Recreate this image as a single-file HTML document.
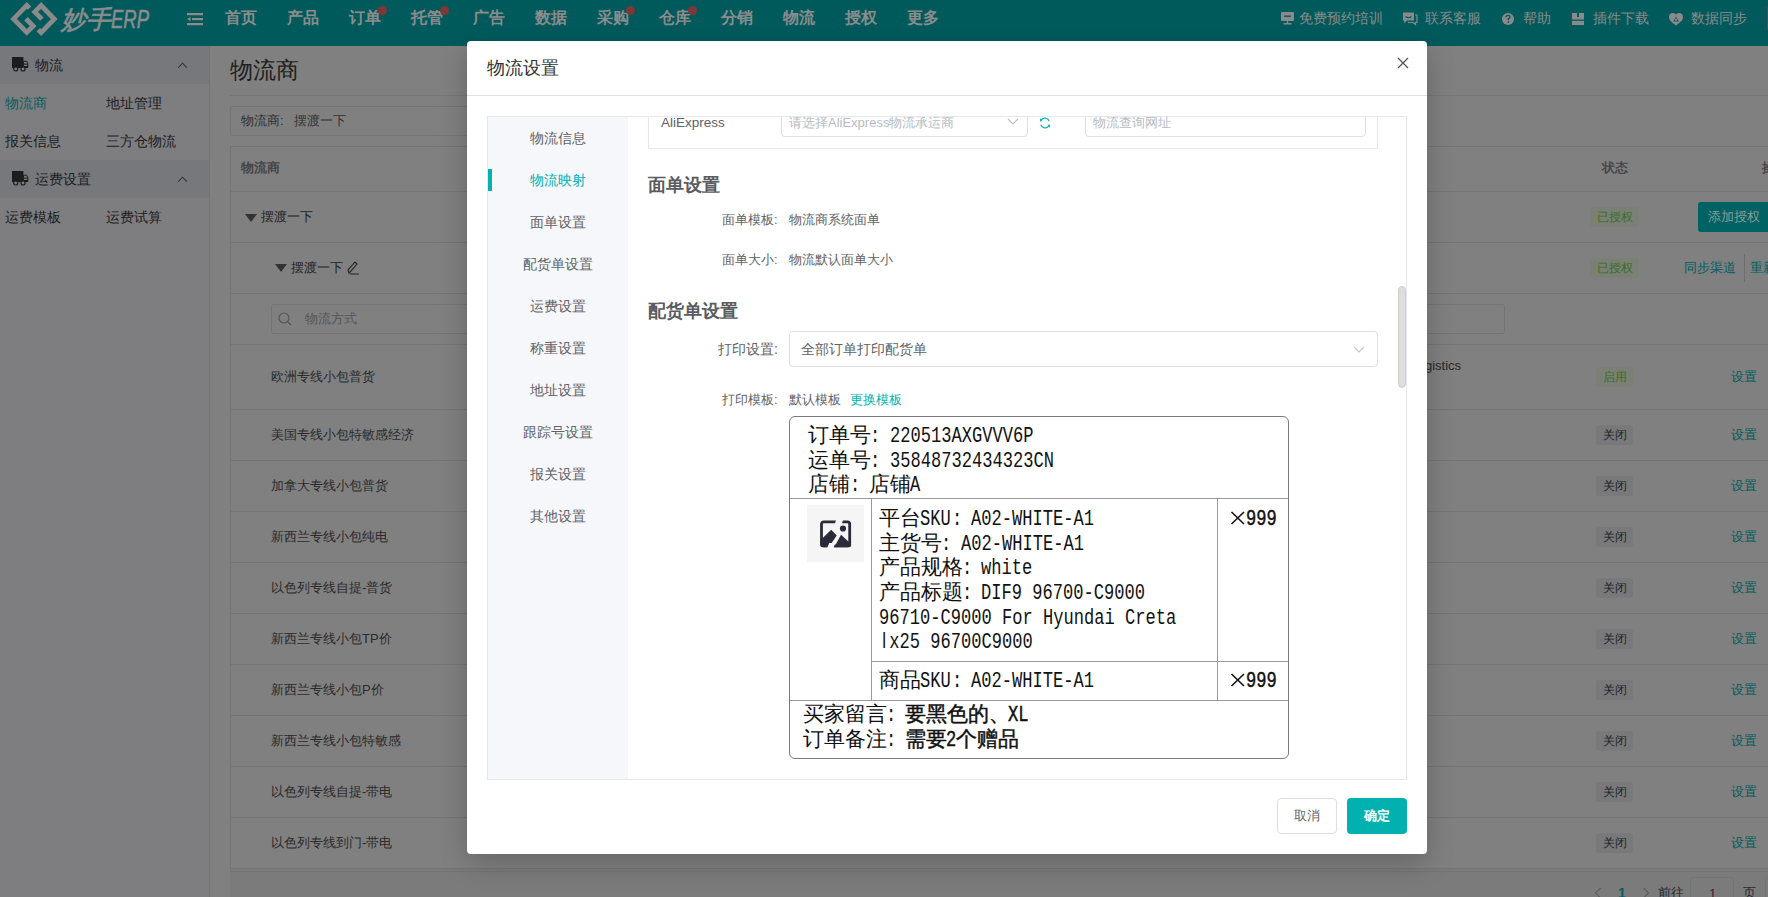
<!DOCTYPE html>
<html><head><meta charset="utf-8">
<style>
*{box-sizing:border-box;margin:0;padding:0;white-space:nowrap}
html,body{width:1768px;height:897px;overflow:hidden;background:#808080;font-family:"Liberation Sans",sans-serif;position:relative}
.a{position:absolute;white-space:nowrap}
#hdr{position:absolute;left:0;top:0;width:1768px;height:46px;background:#005a5c}
.nav{position:absolute;top:7px;font-size:16px;font-weight:bold;color:#8c8c8c;line-height:22px}
.dot{position:absolute;width:9px;height:9px;border-radius:50%;background:#7e3838}
.rn{position:absolute;top:9px;font-size:14px;color:#8a8a8a;line-height:18px}
#side{position:absolute;left:0;top:46px;width:210px;height:851px;background:#7e7e80;border-right:1px solid #737375}
.grp{position:absolute;left:0;width:209px;height:38px;background:#77787b}
.st{position:absolute;font-size:14px;color:#1c1c1e;line-height:18px}
.ln{position:absolute;left:230px;width:1538px;height:1px;background:#737477}
.tc{position:absolute;font-size:13px;color:#2a2a2c;line-height:18px}
.tag{position:absolute;font-size:12px;line-height:20px;height:20px;width:37px;text-align:center;border-radius:3px}
.on{background:#7a8076;color:#3d6e1e}
.off{background:#79797b;color:#222}
.set{position:absolute;left:1731px;font-size:13px;color:#015e5e;line-height:18px}
/* modal */
#modal{position:absolute;left:467px;top:41px;width:960px;height:813px;background:#fff;border-radius:4px;box-shadow:0 8px 28px rgba(0,0,0,.22)}
.mn{position:absolute;left:0;width:140px;text-align:center;font-size:14px;color:#606266;line-height:20px}
.lbl{position:absolute;font-size:13px;color:#606266;line-height:18px}
.t{position:absolute;white-space:nowrap;font-size:20.5px;line-height:24px;color:#111;font-weight:300}
.t.b{-webkit-text-stroke:0.45px #111}
.m{font-family:"Liberation Mono",monospace;display:inline-block;transform:scale(.833,1.1);transform-origin:0 55%;}
</style></head><body>
<div id="hdr">
  <svg class="a" style="left:0;top:0" width="70" height="40" viewBox="0 0 70 40">
    <path d="M29.6 8.1 L26.8 5.3 L13.6 18.9 L26.8 32.4 L33.2 26 L26 18.8" stroke="#8a8a8a" stroke-width="4.8" fill="none" stroke-linejoin="miter" stroke-miterlimit="10"/>
    <path d="M38.3 29.8 L41.1 32.6 L54.3 19 L41.1 5.5 L34.7 11.9 L41.9 19.1" stroke="#8a8a8a" stroke-width="4.8" fill="none" stroke-linejoin="miter" stroke-miterlimit="10"/>
  </svg>
  <div class="a" style="left:61px;top:4px;font-size:25px;font-style:italic;color:#8c8c8c;line-height:30px;-webkit-text-stroke:0.6px #8c8c8c">妙手<span style="display:inline-block;transform:scaleX(.74);transform-origin:0 50%">ERP</span></div>
  <svg class="a" style="left:186px;top:12px" width="18" height="14" viewBox="0 0 18 14">
    <rect x="1" y="1" width="16" height="2.2" fill="#8c8c8c"/><rect x="6" y="6" width="11" height="2.2" fill="#8c8c8c"/><rect x="1" y="11" width="16" height="2.2" fill="#8c8c8c"/><path d="M1 7.1 L4.5 5 L4.5 9.2Z" fill="#8c8c8c"/>
  </svg>
  <div class="nav" style="left:225px">首页</div>
  <div class="nav" style="left:287px">产品</div>
  <div class="nav" style="left:349px">订单</div><div class="dot" style="left:378px;top:6px"></div>
  <div class="nav" style="left:411px">托管</div><div class="dot" style="left:440px;top:6px"></div>
  <div class="nav" style="left:473px">广告</div>
  <div class="nav" style="left:535px">数据</div>
  <div class="nav" style="left:597px">采购</div><div class="dot" style="left:626px;top:6px"></div>
  <div class="nav" style="left:659px">仓库</div><div class="dot" style="left:688px;top:6px"></div>
  <div class="nav" style="left:721px">分销</div>
  <div class="nav" style="left:783px">物流</div>
  <div class="nav" style="left:845px">授权</div>
  <div class="nav" style="left:907px">更多</div>
  <svg class="a" style="left:1280px;top:11px" width="15" height="14" viewBox="0 0 15 14"><rect x="1" y="1" width="13" height="9" rx="1" fill="#8a8a8a"/><rect x="4" y="4.5" width="7" height="1.4" fill="#005a5c"/><rect x="6.8" y="10" width="1.4" height="2.5" fill="#8a8a8a"/><rect x="3.5" y="12" width="8" height="1.5" fill="#8a8a8a"/></svg>
  <svg class="a" style="left:1402px;top:11px" width="16" height="15" viewBox="0 0 16 15"><path d="M1 1.5 H12 V9.5 H5 L2.2 12.5 V9.5 H1Z" fill="#8a8a8a"/><path d="M13 4 H15 V11.5 H13.5 V13.5 L11 11.5 H6" stroke="#8a8a8a" stroke-width="1.2" fill="none"/><path d="M3.5 5.5 Q6.5 8 9.5 5.5" stroke="#005a5c" stroke-width="1.2" fill="none"/></svg>
  <svg class="a" style="left:1501px;top:12px" width="14" height="14" viewBox="0 0 14 14"><circle cx="7" cy="7" r="6" fill="#8a8a8a"/><path d="M5 5.3 Q5 3.4 7 3.4 Q9 3.4 9 5.1 Q9 6.3 7.3 7 V8.3" stroke="#005a5c" stroke-width="1.4" fill="none"/><rect x="6.5" y="9.3" width="1.5" height="1.5" fill="#005a5c"/></svg>
  <svg class="a" style="left:1572px;top:13px" width="12" height="12" viewBox="0 0 12 12"><rect x="0" y="0" width="12" height="12" fill="#8a8a8a"/><rect x="0" y="6.5" width="12" height="1.3" fill="#005a5c"/><rect x="5" y="0" width="2" height="4" fill="#005a5c"/></svg>
  <svg class="a" style="left:1668px;top:12px" width="16" height="14" viewBox="0 0 16 14"><path d="M8 2.5 C6 0 1 0.5 1 5 C1 9 5 11 8 13.5 C11 11 15 9 15 5 C15 0.5 10 0 8 2.5Z" fill="#8a8a8a"/><path d="M8 4.5 L10.8 9.5 H5.2Z" fill="#005a5c"/><circle cx="8" cy="7.8" r="1.2" fill="#8a8a8a"/></svg>
  <div class="rn" style="left:1299px">免费预约培训</div>
  <div class="rn" style="left:1425px">联系客服</div>
  <div class="rn" style="left:1523px">帮助</div>
  <div class="rn" style="left:1593px">插件下载</div>
  <div class="rn" style="left:1691px">数据同步</div>
  <div class="a" style="left:1767px;top:7px;width:1px;height:23px;background:#7e3838"></div>
</div>

<div id="side">
  <div class="grp" style="top:0"></div>
  <svg class="a" style="left:11px;top:11px" width="18" height="15" viewBox="0 0 18 15"><rect x="1" y="0" width="11.4" height="10.5" fill="#1c1c1c"/><path d="M12.4 4.2 H15.6 L16.8 6.5 V10.5 H12.4Z" fill="none" stroke="#1c1c1c" stroke-width="1"/><rect x="12.4" y="6.6" width="4.4" height="1" fill="#1c1c1c"/><rect x="1" y="9" width="16" height="2" fill="#1c1c1c"/><circle cx="4.7" cy="12" r="2" fill="#7e7e80" stroke="#1c1c1c" stroke-width="1.2"/><circle cx="12" cy="12" r="2" fill="#7e7e80" stroke="#1c1c1c" stroke-width="1.2"/></svg><svg class="a" style="left:177px;top:16px" width="11" height="7" viewBox="0 0 11 7"><path d="M1.2 5.6 L5.6 1.2 L9.8 5.6" stroke="#333" stroke-width="1.1" fill="none"/></svg><div class="st" style="left:35px;top:10px">物流</div>
  <div class="st" style="left:5px;top:48px;color:#0b5c5c">物流商</div>
  <div class="st" style="left:106px;top:48px">地址管理</div>
  <div class="st" style="left:5px;top:86px">报关信息</div>
  <div class="st" style="left:106px;top:86px">三方仓物流</div>
  <div class="grp" style="top:114px"></div>
  <svg class="a" style="left:11px;top:125px" width="18" height="15" viewBox="0 0 18 15"><rect x="1" y="0" width="11.4" height="10.5" fill="#1c1c1c"/><path d="M12.4 4.2 H15.6 L16.8 6.5 V10.5 H12.4Z" fill="none" stroke="#1c1c1c" stroke-width="1"/><rect x="12.4" y="6.6" width="4.4" height="1" fill="#1c1c1c"/><rect x="1" y="9" width="16" height="2" fill="#1c1c1c"/><circle cx="4.7" cy="12" r="2" fill="#7e7e80" stroke="#1c1c1c" stroke-width="1.2"/><circle cx="12" cy="12" r="2" fill="#7e7e80" stroke="#1c1c1c" stroke-width="1.2"/></svg><svg class="a" style="left:177px;top:130px" width="11" height="7" viewBox="0 0 11 7"><path d="M1.2 5.6 L5.6 1.2 L9.8 5.6" stroke="#333" stroke-width="1.1" fill="none"/></svg><div class="st" style="left:35px;top:124px">运费设置</div>
  <div class="st" style="left:5px;top:162px">运费模板</div>
  <div class="st" style="left:106px;top:162px">运费试算</div>
</div>

<!-- main page -->
<div class="a" style="left:230px;top:55px;font-size:23px;color:#1e1e1e;line-height:30px">物流商</div>
<div class="a" style="left:230px;top:95px;width:1538px;height:1px;background:#757578"></div>
<div class="a" style="left:230px;top:106px;width:1190px;height:30px;border:1px solid #737477;border-radius:3px"></div>
<div class="tc" style="left:241px;top:112px;color:#303032">物流商:&nbsp;&nbsp;&nbsp;摆渡一下</div>
<div class="a" style="left:230px;top:146px;width:1px;height:723px;background:#737477"></div>
<div class="ln" style="top:146px"></div>
<div class="tc" style="left:241px;top:159px;font-weight:bold;color:#46474b">物流商</div>
<div class="tc" style="left:1602px;top:159px;font-weight:bold;color:#46474b">状态</div>
<div class="tc" style="left:1762px;top:159px;font-weight:bold;color:#46474b">操作</div>
<div class="ln" style="top:191px"></div>
<div class="a" style="left:245px;top:214px;width:0;height:0;border-left:6px solid transparent;border-right:6px solid transparent;border-top:8px solid #333"></div>
<div class="tc" style="left:261px;top:208px;color:#1e1e1e">摆渡一下</div>
<div class="tag on" style="left:1590px;top:207px;width:49px">已授权</div>
<div class="a" style="left:1698px;top:202px;width:80px;height:30px;background:#006262;border-radius:3px;color:#8a9a9a;font-size:13px;line-height:30px;padding-left:10px">添加授权</div>
<div class="ln" style="top:242px"></div>
<div class="a" style="left:275px;top:264px;width:0;height:0;border-left:6px solid transparent;border-right:6px solid transparent;border-top:8px solid #333"></div>
<div class="tc" style="left:291px;top:259px;color:#1e1e1e">摆渡一下</div>
<svg class="a" style="left:346px;top:260px" width="14" height="16" viewBox="0 0 14 16"><path d="M3 13 L2 10 L9 2 L11 4 L4 12 Z M4 14 H13" stroke="#222" stroke-width="1.1" fill="none"/></svg>
<div class="tag on" style="left:1590px;top:258px;width:49px">已授权</div>
<div class="tc" style="left:1684px;top:259px;color:#015e5e">同步渠道</div>
<div class="a" style="left:1744px;top:254px;width:1px;height:28px;background:#6e6e70"></div>
<div class="tc" style="left:1750px;top:259px;color:#015e5e">重新</div>
<div class="ln" style="top:293px"></div>
<div class="a" style="left:271px;top:304px;width:1234px;height:30px;border:1px solid #737477;border-radius:3px"></div>
<svg class="a" style="left:278px;top:312px" width="14" height="14" viewBox="0 0 14 14"><circle cx="6" cy="6" r="5" stroke="#555" stroke-width="1.2" fill="none"/><path d="M10 10 L13 13" stroke="#555" stroke-width="1.2"/></svg>
<div class="tc" style="left:305px;top:310px;color:#555557">物流方式</div>
<div class="ln" style="top:344px"></div>
<div class="tc" style="left:271px;top:368px">欧洲专线小包普货</div>
<div class="tc" style="left:1425px;top:357px">gistics</div>
<div class="tag on" style="left:1596px;top:367px">启用</div>
<div class="set" style="top:368px">设置</div>
<div class="ln" style="top:409px"></div>

<div class="tc" style="left:271px;top:426px">美国专线小包特敏感经济</div><div class="tag off" style="left:1596px;top:425px">关闭</div><div class="set" style="top:426px">设置</div>
<div class="ln" style="top:460px"></div>
<div class="tc" style="left:271px;top:477px">加拿大专线小包普货</div><div class="tag off" style="left:1596px;top:476px">关闭</div><div class="set" style="top:477px">设置</div>
<div class="ln" style="top:511px"></div>
<div class="tc" style="left:271px;top:528px">新西兰专线小包纯电</div><div class="tag off" style="left:1596px;top:527px">关闭</div><div class="set" style="top:528px">设置</div>
<div class="ln" style="top:562px"></div>
<div class="tc" style="left:271px;top:579px">以色列专线自提-普货</div><div class="tag off" style="left:1596px;top:578px">关闭</div><div class="set" style="top:579px">设置</div>
<div class="ln" style="top:613px"></div>
<div class="tc" style="left:271px;top:630px">新西兰专线小包TP价</div><div class="tag off" style="left:1596px;top:629px">关闭</div><div class="set" style="top:630px">设置</div>
<div class="ln" style="top:664px"></div>
<div class="tc" style="left:271px;top:681px">新西兰专线小包P价</div><div class="tag off" style="left:1596px;top:680px">关闭</div><div class="set" style="top:681px">设置</div>
<div class="ln" style="top:715px"></div>
<div class="tc" style="left:271px;top:732px">新西兰专线小包特敏感</div><div class="tag off" style="left:1596px;top:731px">关闭</div><div class="set" style="top:732px">设置</div>
<div class="ln" style="top:766px"></div>
<div class="tc" style="left:271px;top:783px">以色列专线自提-带电</div><div class="tag off" style="left:1596px;top:782px">关闭</div><div class="set" style="top:783px">设置</div>
<div class="ln" style="top:817px"></div>
<div class="tc" style="left:271px;top:834px">以色列专线到门-带电</div><div class="tag off" style="left:1596px;top:833px">关闭</div><div class="set" style="top:834px">设置</div>
<div class="ln" style="top:868px"></div>
<!-- pagination -->
<div class="a" style="left:230px;top:869px;width:1538px;height:28px;background:#7b7b7c"></div>
<div class="a" style="left:230px;top:871px;width:1538px;height:1px;background:#717379"></div>
<svg class="a" style="left:1594px;top:887px" width="8" height="12" viewBox="0 0 8 12"><path d="M6.5 1 L1.5 6 L6.5 11" stroke="#4a4a4c" stroke-width="1" fill="none"/></svg>
<div class="tc" style="left:1618px;top:884px;color:#015e5e;font-size:14px;font-weight:bold">1</div>
<svg class="a" style="left:1642px;top:887px" width="8" height="12" viewBox="0 0 8 12"><path d="M1.5 1 L6.5 6 L1.5 11" stroke="#4a4a4c" stroke-width="1" fill="none"/></svg>
<div class="tc" style="left:1658px;top:884px;color:#2a2a2c">前往</div>
<div class="a" style="left:1690px;top:877px;width:44px;height:30px;border:1px solid #737477;border-radius:3px"></div>
<div class="tc" style="left:1709px;top:885px;color:#2a2a2c">1</div>
<div class="tc" style="left:1743px;top:884px;color:#2a2a2c">页</div>
<div class="a" style="left:1765px;top:877px;width:20px;height:30px;border:1px solid #737477;border-radius:3px"></div>

<div id="modal">
  <div class="a" style="left:20px;top:15px;font-size:18px;color:#303133;line-height:24px">物流设置</div>
  <svg class="a" style="left:930px;top:16px" width="12" height="12" viewBox="0 0 12 12"><path d="M1 1 L11 11 M11 1 L1 11" stroke="#555" stroke-width="1.3"/></svg>
  <div class="a" style="left:0;top:54px;width:960px;height:1px;background:#dcdfe6"></div>
  <div class="a" style="left:20px;top:75px;width:920px;height:664px;border:1px solid #e4e7ed;overflow:hidden">
    <div class="a" style="left:0;top:0;width:140px;height:664px;background:#f5f7fa"></div>
    <div class="a" style="left:0;top:52px;width:4px;height:22px;background:#00b1b3"></div>
    <div class="mn" style="top:11px">物流信息</div>
    <div class="mn" style="top:53px;color:#00b1b3">物流映射</div>
    <div class="mn" style="top:95px">面单设置</div>
    <div class="mn" style="top:137px">配货单设置</div>
    <div class="mn" style="top:179px">运费设置</div>
    <div class="mn" style="top:221px">称重设置</div>
    <div class="mn" style="top:263px">地址设置</div>
    <div class="mn" style="top:305px">跟踪号设置</div>
    <div class="mn" style="top:347px">报关设置</div>
    <div class="mn" style="top:389px">其他设置</div>
    <!-- scrolled card -->
    <div class="a" style="left:160px;top:-10px;width:730px;height:42px;border:1px solid #e4e7ed"></div>
    <div class="a" style="left:173px;top:-3px;font-size:13.5px;color:#606266;line-height:18px">AliExpress</div>
    <div class="a" style="left:293px;top:-10px;width:247px;height:30px;border:1px solid #dcdfe6;border-radius:4px"></div>
    <div class="a" style="left:301px;top:-3px;font-size:13px;color:#b8bbc2;line-height:18px">请选择AliExpress物流承运商</div>
    <svg class="a" style="left:519px;top:1px" width="12" height="7" viewBox="0 0 12 7"><path d="M1 1 L6 6 L11 1" stroke="#b8bbc2" stroke-width="1.1" fill="none"/></svg>
    <svg class="a" style="left:551px;top:0px" width="12" height="12" viewBox="0 0 12 12"><path d="M10.2 4.2 A4.6 4.6 0 0 0 2.2 3 M1.8 7.8 A4.6 4.6 0 0 0 9.8 9" stroke="#1ab5b5" stroke-width="1.3" fill="none"/><path d="M1 1 L3.6 4.2 L1 4.4Z M11 11 L8.4 7.8 L11 7.6Z" fill="#1ab5b5"/></svg>
    <div class="a" style="left:597px;top:-10px;width:281px;height:30px;border:1px solid #dcdfe6;border-radius:4px"></div>
    <div class="a" style="left:605px;top:-3px;font-size:13px;color:#b8bbc2;line-height:18px">物流查询网址</div>
    <!-- sections -->
    <div class="a" style="left:160px;top:56px;font-size:18px;font-weight:bold;color:#5a5c60;line-height:24px">面单设置</div>
    <div class="lbl" style="left:234px;top:94px">面单模板:</div>
    <div class="lbl" style="left:301px;top:94px">物流商系统面单</div>
    <div class="lbl" style="left:234px;top:134px">面单大小:</div>
    <div class="lbl" style="left:301px;top:134px">物流默认面单大小</div>
    <div class="a" style="left:160px;top:182px;font-size:18px;font-weight:bold;color:#5a5c60;line-height:24px">配货单设置</div>
    <div class="lbl" style="left:230px;top:223px;font-size:14px">打印设置:</div>
    <div class="a" style="left:301px;top:214px;width:589px;height:36px;border:1px solid #dcdfe6;border-radius:4px"></div>
    <div class="a" style="left:313px;top:223px;font-size:14px;color:#606266;line-height:18px">全部订单打印配货单</div>
    <svg class="a" style="left:865px;top:229px" width="12" height="7" viewBox="0 0 12 7"><path d="M1 1 L6 6 L11 1" stroke="#c4c7ce" stroke-width="1.1" fill="none"/></svg>
    <div class="lbl" style="left:234px;top:274px">打印模板:</div>
    <div class="lbl" style="left:301px;top:274px">默认模板</div>
    <div class="lbl" style="left:362px;top:274px;color:#00b1b3">更换模板</div>
    <!-- template image -->
    <div class="a" style="left:301px;top:299px;width:500px;height:343px;border:1.5px solid #7a7a7a;border-radius:6px;background:#fff"></div>
    <div class="a" style="left:302px;top:381px;width:498px;height:1.3px;background:#999"></div>
    <div class="a" style="left:383px;top:382px;width:1.3px;height:201px;background:#999"></div>
    <div class="a" style="left:729px;top:382px;width:1.3px;height:201px;background:#999"></div>
    <div class="a" style="left:384px;top:544px;width:416px;height:1.3px;background:#999"></div>
    <div class="a" style="left:302px;top:582.7px;width:498px;height:1.3px;background:#999"></div>
    <div class="a" style="left:319px;top:388px;width:57px;height:57px;background:#f5f5f5"></div>
    <svg class="a" style="left:330px;top:401px" width="36" height="32" viewBox="0 0 36 32"><rect x="3.5" y="3.9" width="28.2" height="23.9" rx="2.2" stroke="#2a2a38" stroke-width="2.8" fill="none"/><path d="M18.6 0.5 H25.6 L23 8 H16Z" fill="#f5f5f5"/><path d="M2.2 22.6 L13.2 11.7 L18.7 17.5 L10.8 29.2 H4.5 Q2.2 29.2 2.2 27Z" fill="#2a2a38"/><path d="M16.3 29.2 L23 16.8 L33.1 25.9 V27 Q33.1 29.2 31 29.2Z" fill="#2a2a38"/><path d="M11.2 25 H17.4 L14.8 31.5 H8.5Z" fill="#f5f5f5"/><path d="M10.8 29.2 L15.5 22 L16.3 29.2Z" fill="none"/><circle cx="25" cy="10.5" r="3.1" fill="#2a2a38"/></svg>
    <!--TPL-->
<div class="t" style="left:319.60px;top:306.00px">订单号</div>
<div class="t" style="left:382.10px;top:306.00px"><span class="m">:</span></div>
<div class="t" style="left:401.60px;top:306.00px"><span class="m">220513AXGVVV6P</span></div>
<div class="t" style="left:319.60px;top:330.50px">运单号</div>
<div class="t" style="left:382.10px;top:330.50px"><span class="m">:</span></div>
<div class="t" style="left:401.60px;top:330.50px"><span class="m">35848732434323CN</span></div>
<div class="t" style="left:319.60px;top:355.00px">店铺</div>
<div class="t" style="left:361.60px;top:355.00px"><span class="m">:</span></div>
<div class="t" style="left:381.10px;top:355.00px">店铺</div>
<div class="t" style="left:422.10px;top:355.00px"><span class="m">A</span></div>
<div class="t" style="left:390.80px;top:388.60px">平台</div>
<div class="t" style="left:431.80px;top:388.60px"><span class="m">SKU</span></div>
<div class="t" style="left:463.55px;top:388.60px"><span class="m">:</span></div>
<div class="t" style="left:483.05px;top:388.60px"><span class="m">A02-WHITE-A1</span></div>
<div class="t" style="left:390.80px;top:413.50px">主货号</div>
<div class="t" style="left:453.30px;top:413.50px"><span class="m">:</span></div>
<div class="t" style="left:472.80px;top:413.50px"><span class="m">A02-WHITE-A1</span></div>
<div class="t" style="left:390.80px;top:438.00px">产品规格</div>
<div class="t" style="left:473.80px;top:438.00px"><span class="m">:</span></div>
<div class="t" style="left:493.30px;top:438.00px"><span class="m">white</span></div>
<div class="t" style="left:390.80px;top:462.60px">产品标题</div>
<div class="t" style="left:473.80px;top:462.60px"><span class="m">:</span></div>
<div class="t" style="left:493.30px;top:462.60px"><span class="m">DIF9&nbsp;96700-C9000</span></div>
<div class="t" style="left:390.80px;top:487.50px"><span class="m">96710-C9000&nbsp;For&nbsp;Hyundai&nbsp;Creta</span></div>
<div class="t" style="left:390.80px;top:512.00px"><span class="m"><span style="font-family:'Liberation Sans',sans-serif;display:inline-block;width:12.3px;text-align:center">l</span>x25&nbsp;96700C9000</span></div>
<div class="t" style="left:390.80px;top:551.00px">商品</div>
<div class="t" style="left:431.80px;top:551.00px"><span class="m">SKU</span></div>
<div class="t" style="left:463.55px;top:551.00px"><span class="m">:</span></div>
<div class="t" style="left:483.05px;top:551.00px"><span class="m">A02-WHITE-A1</span></div>
<svg class="a" style="left:741.50px;top:393.60px" width="16" height="14" viewBox="0 0 16 14"><path d="M1.5 1 L14 13 M14 1 L1.5 13" stroke="#111" stroke-width="1.6"/></svg>
<div class="t b" style="left:758.00px;top:388.60px"><span class="m">999</span></div>
<svg class="a" style="left:741.50px;top:556.00px" width="16" height="14" viewBox="0 0 16 14"><path d="M1.5 1 L14 13 M14 1 L1.5 13" stroke="#111" stroke-width="1.6"/></svg>
<div class="t b" style="left:758.00px;top:551.00px"><span class="m">999</span></div>
<div class="t" style="left:314.70px;top:585.00px">买家留言</div>
<div class="t" style="left:397.70px;top:585.00px"><span class="m">:</span></div>
<div class="t" style="left:314.70px;top:610.40px">订单备注</div>
<div class="t" style="left:397.70px;top:610.40px"><span class="m">:</span></div>
<div class="t b" style="left:417.20px;top:585.00px">要黑色的、</div>
<div class="t b" style="left:519.70px;top:585.00px"><span class="m">XL</span></div>
<div class="t b" style="left:417.20px;top:610.40px">需要</div>
<div class="t b" style="left:458.20px;top:610.40px"><span class="m">2</span></div>
<div class="t b" style="left:468.45px;top:610.40px">个赠品</div>
<!--/TPL-->

<div class="a" style="left:910px;top:169px;width:8px;height:102px;background:#dedede;border:1px solid #cfcfcf;border-radius:4px"></div>
  </div>
  <!-- footer -->
  <div class="a" style="left:810px;top:757px;width:60px;height:36px;border:1px solid #dcdfe6;border-radius:4px;text-align:center;font-size:13px;line-height:34px;color:#606266">取消</div>
  <div class="a" style="left:880px;top:757px;width:60px;height:36px;background:#00b1b0;border-radius:4px;text-align:center;font-size:13px;line-height:36px;color:#fff;font-weight:bold">确定</div>
</div>
</body></html>
